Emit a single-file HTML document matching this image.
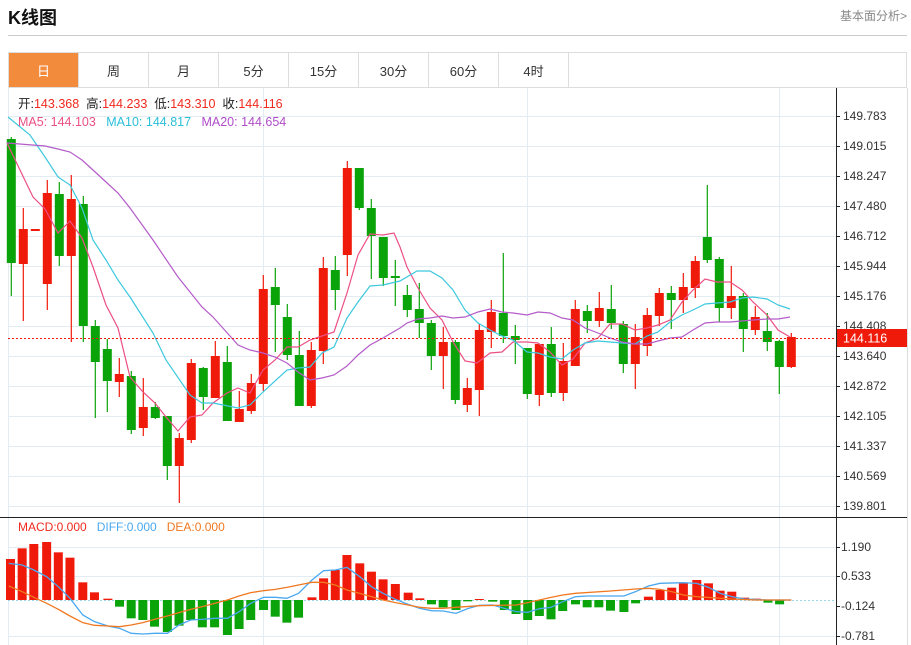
<!DOCTYPE html>
<html><head><meta charset="utf-8">
<style>
*{margin:0;padding:0;box-sizing:border-box}
body{width:911px;height:645px;background:#fff;font-family:"Liberation Sans","Noto Sans CJK SC",sans-serif;position:relative;overflow:hidden}
.title{position:absolute;left:8px;top:4px;font-size:18px;font-weight:bold;color:#111}
.more{position:absolute;right:4px;top:7px;font-size:12px;color:#888}
.hr{position:absolute;left:8px;top:35px;width:899px;height:1px;background:#ccc}
.tabs{position:absolute;left:8px;top:52px;width:899px;height:36px;border:1px solid #ddd;display:flex}
.tab{width:70px;height:100%;border-right:1px solid #ddd;font-size:13px;color:#333;display:flex;align-items:center;justify-content:center}
.tab.on{background:#f28b3c;color:#fff}
svg{position:absolute;left:0;top:0}
</style></head><body>
<div class="title">K线图</div>
<div class="more">基本面分析&gt;</div>
<div class="hr"></div>
<div class="tabs"><div class="tab on">日</div><div class="tab">周</div><div class="tab">月</div><div class="tab">5分</div><div class="tab">15分</div><div class="tab">30分</div><div class="tab">60分</div><div class="tab">4时</div></div>
<svg id="s" width="911" height="645" xmlns="http://www.w3.org/2000/svg" font-family="Liberation Sans, Noto Sans CJK SC, sans-serif"></svg>
<script>
const NS="http://www.w3.org/2000/svg";const s=document.getElementById('s');
function el(t,a,txt){const e=document.createElementNS(NS,t);for(const k in a)e.setAttribute(k,a[k]);if(txt!=null)e.textContent=txt;s.appendChild(e);return e}
// frame
el('line',{x1:907.5,y1:88,x2:907.5,y2:645,stroke:'#ddd'});
// grid
for(let i=0;i<14;i++){const y=116+i*30+.5;el('line',{x1:8,y1:y,x2:836,y2:y,stroke:'#e3ecf3'})}
[547,576,636].forEach(y=>el('line',{x1:8,y1:y+.5,x2:836,y2:y+.5,stroke:'#e3ecf3'}));
[263,527,779].forEach(x=>el('line',{x1:x+.5,y1:88,x2:x+.5,y2:645,stroke:'#e3ecf3'}));
el('line',{x1:8.5,y1:88,x2:8.5,y2:645,stroke:'#e3ecf3'});
// axes
el('line',{x1:836.5,y1:88,x2:836.5,y2:645,stroke:'#222'});
el('line',{x1:0,y1:517.5,x2:907,y2:517.5,stroke:'#222'});
const pl=['149.783','149.015','148.247','147.480','146.712','145.944','145.176','144.408','143.640','142.872','142.105','141.337','140.569','139.801'];
pl.forEach((t,i)=>{const y=116+i*30;el('line',{x1:836,y1:y+.5,x2:840,y2:y+.5,stroke:'#222'});el('text',{x:843,y:y+4,'font-size':12,fill:'#333'},t)});
[['1.190',547],['0.533',576],['-0.124',606],['-0.781',636]].forEach(([t,y])=>{el('line',{x1:836,y1:y+.5,x2:840,y2:y+.5,stroke:'#222'});el('text',{x:841,y:y+4,'font-size':12,fill:'#333'},t)});
// candles [color, bodyTop, bodyBot, wickTop, wickBot]
const C=[['g',139,263,137,296],['r',229,264,208,321],['r',229,231,229,231],['r',193,284,180,310],['g',194,256,182,266],['r',199,256,175,342],['g',204,326,196,342],['g',326,362,320,418],['g',349,381,339,412],['r',374,382,358,397],['g',376,430,371,434],['r',407,428,378,436],['g',407,418,402,419],['g',416,466,416,480],['r',438,466,433,503],['r',363,440,359,443],['g',368,397,367,410],['r',356,398,341,398],['g',362,421,346,421],['r',409,422,391,422],['r',383,411,374,414],['r',289,384,275,391],['g',287,305,268,352],['g',317,355,304,360],['g',355,406,331,406],['r',350,406,342,408],['r',268,351,257,364],['g',270,290,256,310],['r',168,255,161,276],['g',168,208,168,210],['g',208,236,199,279],['g',237,278,237,286],['g',276,278,260,306],
['g',295,310,285,317],['g',309,323,283,338],['g',323,356,320,370],['r',342,356,327,389],['g',342,400,340,404],['r',388,405,378,412],['r',330,390,324,416],['r',312,332,300,348],['g',313,336,253,343],['g',336,340,325,364],['g',348,394,348,399],['r',344,395,344,406],['g',344,393,327,397],['r',361,393,343,401],['r',309,366,300,366],['g',311,321,305,333],['r',308,321,292,327],['g',309,323,285,329],['g',324,364,321,373],['r',337,364,324,389],['r',315,346,308,356],['r',293,316,288,326],['g',293,300,286,329],['r',287,300,273,313],['r',261,288,256,298],['g',237,260,185,263],['g',259,308,257,322],['r',296,308,266,319],['g',296,329,293,352],['r',317,330,306,335],['g',331,342,313,351],['g',341,367,340,394],['r',337,367,333,368]];
C.forEach((c,i)=>{const x=11.3+i*12;const col=c[0]=='g'?'#0aa30a':'#f01a0a';
el('line',{x1:x,y1:c[3],x2:x,y2:c[4],stroke:col,'stroke-width':1.2});
el('rect',{x:x-4.5,y:c[1],width:9,height:Math.max(1.5,c[2]-c[1]),fill:col});});
function pl2(pts,col,w){el('polyline',{points:pts.map(p=>p.join(',')).join(' '),fill:'none',stroke:col,'stroke-width':w||1.2})}
pl2([[7,143],[33,197],[45,209],[58,233],[70,221],[82,238],[93,267],[106,305],[118,328],[130,377],[143,392],[155,403],[166,417],[178,431],[190,417],[202,415],[213,403],[227,393],[238,388],[250,393],[263,370],[275,360],[287,347],[298,347],[310,340],[322,336],[334,332],[347,293],[358,255],[370,234],[383,235],[394,233],[400,247],[407,267],[418,288],[430,308],[442,320],[453,342],[465,361],[477,363],[490,353],[502,352],[513,342],[527,342],[538,343],[550,352],[562,365],[573,359],[585,343],[598,338],[610,324],[622,324],[635,330],[647,328],[658,325],[670,320],[682,302],[693,290],[705,279],[717,282],[730,282],[742,290],[753,302],[767,315],[778,330],[790,337]],'#ec4f84');
pl2([[8,117],[30,135],[45,157],[58,177],[70,185],[82,208],[93,240],[106,260],[118,280],[130,297],[153,333],[166,360],[190,395],[202,403],[213,403],[238,408],[250,405],[263,392],[287,370],[298,368],[310,367],[322,353],[334,347],[347,318],[358,302],[370,286],[383,285],[400,281],[417,271],[430,271],[442,278],[453,290],[465,310],[478,323],[490,330],[502,336],[513,340],[527,352],[538,353],[550,357],[562,359],[573,350],[585,343],[598,341],[610,342],[622,343],[635,344],[647,336],[658,332],[670,322],[682,315],[693,310],[705,304],[717,303],[730,302],[742,298],[753,297],[767,299],[778,305],[790,309]],'#3cc8de');
pl2([[7,143],[45,146],[58,149],[70,152],[82,160],[93,170],[106,182],[118,193],[130,208],[153,240],[178,277],[202,307],[213,317],[238,345],[250,350],[263,353],[275,357],[287,363],[298,372],[310,380],[322,378],[334,375],[347,366],[358,355],[370,345],[383,338],[400,328],[407,323],[418,319],[430,318],[442,316],[453,318],[465,317],[478,312],[490,309],[502,312],[513,313],[527,315],[538,312],[550,313],[562,318],[573,320],[585,328],[598,333],[610,338],[622,342],[635,344],[647,344],[658,341],[670,338],[682,337],[693,330],[705,323],[717,322],[730,322],[742,321],[753,320],[767,319],[778,319],[790,317]],'#b45cc8');
// current price line
el('line',{x1:8,y1:338.5,x2:836,y2:338.5,stroke:'#f01a0a','stroke-dasharray':'2,2'});
el('rect',{x:837,y:329,width:70,height:18,fill:'#f01a0a'});
el('text',{x:843,y:342.5,'font-size':12.5,fill:'#fff'},'144.116');
// info text
function tx(x,y,parts,fs){const t=el('text',{x:x,y:y,'font-size':fs||12.5});parts.forEach(([s2,c])=>{const sp=document.createElementNS(NS,'tspan');sp.setAttribute('fill',c);sp.textContent=s2;t.appendChild(sp)})}
const R='#f0291e',K='#222';
tx(18,108,[['开:',K],['143.368  ',R],['高:',K],['144.233  ',R],['低:',K],['143.310  ',R],['收:',K],['144.116',R]]);
tx(18,126,[['MA5: 144.103   ','#ec4f84'],['MA10: 144.817   ','#29c0d8'],['MA20: 144.654','#b04dc8']]);
document.querySelectorAll('text tspan').forEach(()=>{});
s.querySelectorAll('text').forEach(t=>t.setAttribute('xml:space','preserve'));
tx(18,531,[['MACD:0.000   ','#f0291e'],['DIFF:0.000   ','#4aa8f0'],['DEA:0.000','#f07820']],12);
s.querySelectorAll('text').forEach(t=>t.setAttribute('style','white-space:pre'));
// MACD
el('line',{x1:8,y1:600.5,x2:836,y2:600.5,stroke:'#9cd8ea','stroke-dasharray':'2,2'});
const H=[[18,147],[38,115],[58,102],[80,96],[100,127],[120,143],[142,217],[162,247],[185,266],[205,290],[225,325],[245,330],[265,350],[287,366],[307,347],[327,330],[347,352],[368,352],[390,375],[410,357],[430,330],[452,300],[472,320],[492,338],[512,323],[535,262],[555,205],[575,180],[595,135],[617,160],[637,185],[657,208],[678,222],[700,248],[720,265],[740,283],[760,292],[782,300],[802,274],[822,267],[845,275],[865,300],[885,312],[905,330],[925,318],[945,328],[965,303],[987,283],[1007,292],[1027,292],[1047,302],[1070,306],[1090,280],[1112,260],[1132,240],[1152,233],[1172,220],[1195,210],[1215,220],[1235,242],[1255,245],[1277,263],[1297,266],[1317,278],[1337,283]];
H.forEach(([px,py])=>{const x=px/1.715;const y=510+py/3;const col=y<600?'#f01a0a':'#0aa30a';const a=Math.min(y,600),b=Math.max(y,600);el('rect',{x:x-4.5,y:a,width:9,height:Math.max(1,b-a),fill:col})});
function mp(arr,col){pl2(arr.map(([px,py])=>[px/1.715,510+py/3]),col,1.3)}
mp([[15,160],[38,165],[58,180],[80,200],[100,230],[120,265],[142,315],[162,335],[185,348],[205,355],[225,370],[245,372],[265,370],[287,370],[307,345],[327,330],[347,328],[368,325],[390,325],[410,305],[430,280],[452,262],[472,262],[492,265],[512,250],[535,210],[555,182],[575,180],[595,172],[617,200],[637,230],[657,250],[678,268],[700,283],[720,295],[740,302],[760,303],[782,310],[802,296],[822,286],[845,285],[865,295],[885,305],[905,307],[925,296],[945,292],[965,275],[987,260],[1007,258],[1070,258],[1090,245],[1112,228],[1132,220],[1172,218],[1195,220],[1215,232],[1235,250],[1255,260],[1277,267],[1317,270],[1357,270]],'#4aa8f0');
mp([[15,228],[38,245],[58,262],[80,280],[100,298],[120,318],[142,338],[162,346],[185,348],[205,350],[225,345],[245,338],[265,328],[287,318],[307,308],[327,298],[347,290],[368,280],[390,270],[410,258],[430,248],[452,242],[472,238],[492,232],[512,225],[535,217],[555,217],[575,225],[595,240],[617,250],[637,260],[657,270],[678,278],[700,285],[720,292],[740,295],[760,295],[782,292],[822,287],[885,285],[905,278],[925,270],[945,262],[965,255],[987,250],[1047,243],[1090,237],[1112,235],[1132,238],[1152,245],[1172,255],[1195,260],[1255,267],[1297,270],[1357,270]],'#f07820');
</script>
</body></html>
